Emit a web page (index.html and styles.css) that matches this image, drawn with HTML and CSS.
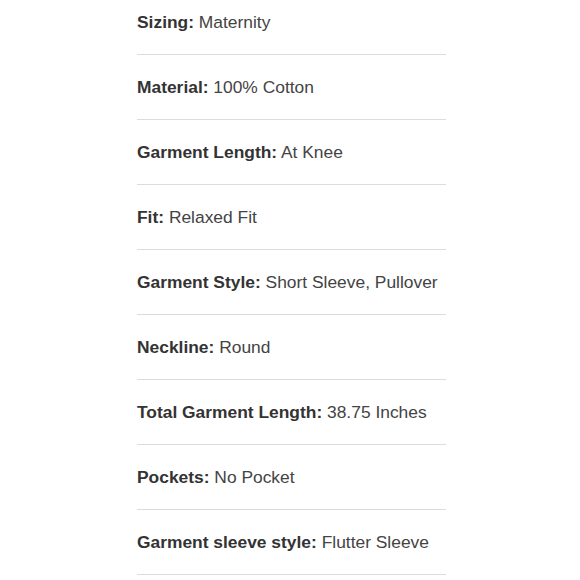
FILE: index.html
```html
<!DOCTYPE html>
<html>
<head>
<meta charset="utf-8">
<link rel="stylesheet" href="styles.css">
</head>
<body>
<ul class="specs">
  <li class="spec"><b class="label">Sizing:</b> <span class="value">Maternity</span></li>
  <li class="spec"><b class="label">Material:</b> <span class="value">100% Cotton</span></li>
  <li class="spec"><b class="label">Garment Length:</b> <span class="value">At Knee</span></li>
  <li class="spec"><b class="label">Fit:</b> <span class="value">Relaxed Fit</span></li>
  <li class="spec"><b class="label">Garment Style:</b> <span class="value">Short Sleeve, Pullover</span></li>
  <li class="spec"><b class="label">Neckline:</b> <span class="value">Round</span></li>
  <li class="spec"><b class="label">Total Garment Length:</b> <span class="value">38.75 Inches</span></li>
  <li class="spec"><b class="label">Pockets:</b> <span class="value">No Pocket</span></li>
  <li class="spec"><b class="label">Garment sleeve style:</b> <span class="value">Flutter Sleeve</span></li>
</ul>
</body>
</html>
```
FILE: styles.css
```css
html, body {
  margin: 0;
  padding: 0;
  background: #fff;
}
body {
  font-family: "Liberation Sans", Arial, sans-serif;
  font-size: 17.4px;
  color: #444;
}
.specs {
  list-style: none;
  margin: 0 0 0 137px;
  padding: 0;
  width: 309px;
}
.spec {
  height: 20px;
  line-height: 20px;
  padding: 22px 0 22px;
  border-bottom: 1px solid #dcdcdc;
  white-space: nowrap;
}
.spec:first-child {
  padding-top: 12px;
}
.label {
  font-weight: bold;
  color: #333;
}
.value {
  color: #444;
}
```
